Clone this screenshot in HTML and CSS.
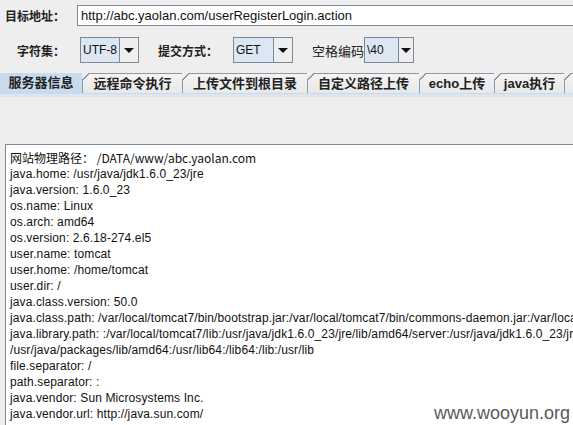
FILE: index.html
```html
<!DOCTYPE html>
<html>
<head>
<meta charset="utf-8">
<link rel="stylesheet" href="styles.css">
</head>
<body>
<div class="app">
  <div class="row url-row">
    <span class="label">目标地址：</span>
    <div class="input">http://abc.yaolan.com/userRegisterLogin.action</div>
  </div>
  <div class="row opt-row">
    <span class="label l1">字符集：</span>
    <div class="combo c1"><span class="val">UTF-8</span><span class="arrow"></span></div>
    <span class="label l2">提交方式：</span>
    <div class="combo c2"><span class="val">GET</span><span class="arrow"></span></div>
    <span class="label l3">空格编码</span>
    <div class="combo c3"><span class="val">\40</span><span class="arrow"></span></div>
  </div>
  <div class="tabs">
    <div class="tab sel t1">服务器信息</div>
    <div class="tab t2">远程命令执行</div>
    <div class="tab t3">上传文件到根目录</div>
    <div class="tab t4">自定义路径上传</div>
    <div class="tab t5">echo上传</div>
    <div class="tab t6">java执行</div>
    <div class="tab t7"></div>
  </div>
  <div class="band"></div>
  <div class="panel">
    <div class="textarea">
      <div class="cjk">网站物理路径： /DATA/www/abc.yaolan.com</div>
      <div>java.home: /usr/java/jdk1.6.0_23/jre</div>
      <div>java.version: 1.6.0_23</div>
      <div>os.name: Linux</div>
      <div>os.arch: amd64</div>
      <div>os.version: 2.6.18-274.el5</div>
      <div>user.name: tomcat</div>
      <div>user.home: /home/tomcat</div>
      <div>user.dir: /</div>
      <div>java.class.version: 50.0</div>
      <div>java.class.path: /var/local/tomcat7/bin/bootstrap.jar:/var/local/tomcat7/bin/commons-daemon.jar:/var/loca</div>
      <div>java.library.path: :/var/local/tomcat7/lib:/usr/java/jdk1.6.0_23/jre/lib/amd64/server:/usr/java/jdk1.6.0_23/jre</div>
      <div>/usr/java/packages/lib/amd64:/usr/lib64:/lib64:/lib:/usr/lib</div>
      <div>file.separator: /</div>
      <div>path.separator: :</div>
      <div>java.vendor: Sun Microsystems Inc.</div>
      <div>java.vendor.url: http://java.sun.com/</div>
    </div>
    <div class="watermark">www.wooyun.org</div>
  </div>
</div>
</body>
</html>
```
FILE: styles.css
```css
html, body {
  margin: 0;
  padding: 0;
  background: #eeeeee;
  overflow: hidden;
}
.app {
  width: 573px;
  height: 425px;
  display: flex;
  flex-direction: column;
  font-family: "Liberation Sans", Arial, "Noto Sans CJK SC", sans-serif;
  color: #111;
  overflow: hidden;
}
.row {
  display: flex;
  align-items: center;
}
.url-row {
  height: 21px;
  padding-top: 5px;
}
.label {
  font-family: "Noto Sans CJK SC", sans-serif;
  font-weight: bold;
  font-size: 12px;
  color: #222;
  white-space: nowrap;
}
.url-row .label {
  margin-left: 5px;
  width: 72px;
}
.input {
  flex: 1;
  height: 19px;
  border: 1px solid #7a8a99;
  border-right: none;
  background: #fff;
  font-size: 13px;
  line-height: 19px;
  padding-left: 3px;
  white-space: nowrap;
}
.opt-row {
  height: 26px;
  margin-top: 11px;
}
.l1 { margin-left: 17px; width: 63px; }
.l2 { margin-left: 19px; width: 75px; }
.l3 { margin-left: 19px; width: 52px; font-weight: normal; font-size: 13px; }
.combo {
  display: flex;
  height: 24px;
  border: 1px solid #7a8a99;
  background: #eeeeee;
}
.combo .val {
  background: #dce7f3;
  border-right: 1px solid #7a8a99;
  font-size: 12px;
  line-height: 24px;
  padding-left: 2px;
  white-space: nowrap;
  overflow: hidden;
}
.c1 .val { width: 36px; }
.c2 .val { width: 37px; }
.c3 .val { width: 31px; }
.combo .arrow {
  width: 18px;
  display: flex;
  align-items: center;
  justify-content: center;
}
.combo .arrow::after {
  content: "";
  border-left: 5px solid transparent;
  border-right: 5px solid transparent;
  border-top: 5px solid #111;
}
.c3 .arrow { width: 14px; }
.tabs {
  display: flex;
  margin-top: 10px;
  height: 20px;
  align-items: flex-end;
  overflow: hidden;
}
.tab {
  position: relative;
  flex-shrink: 0;
  box-sizing: border-box;
  height: 20px;
  border: 1px solid #8a9aab;
  border-bottom: none;
  margin-right: -1px;
  background: linear-gradient(#f4f4f4, #e8e8e8);
  font-family: "Liberation Sans", Arial, "Noto Sans CJK SC", sans-serif;
  font-weight: bold;
  font-size: 13px;
  line-height: 19px;
  color: #222;
  white-space: nowrap;
  text-align: center;
}
.tab::before {
  content: "";
  position: absolute;
  left: -1px;
  top: -1px;
  width: 7px;
  height: 7px;
  background: linear-gradient(135deg, #eeeeee 0, #eeeeee 46%, #8a9aab 46%, #8a9aab 60%, transparent 60%);
}
.tab.sel {
  background: #c8dbee;
  height: 21px;
}
.t1 { width: 83px; border-left: none; }
.t1::before { display: none; }
.t2 { width: 101px; }
.t3 { width: 126px; }
.t4 { width: 113px; }
.t5 { width: 76px; }
.t6 { width: 71px; }
.t7 { width: 20px; }
.band {
  height: 3px;
  border-top: 1px solid #c8dbee;
  background: #dde6ef;
}
.panel {
  flex: 1;
  display: flex;
  position: relative;
  padding-top: 47px;
  padding-left: 5px;
}
.textarea {
  flex: 1;
  background: #fff;
  border-top: 1px solid #7a8a99;
  border-left: 1px solid #7a8a99;
  padding: 5px 0 0 4px;
  font-size: 12px;
  letter-spacing: 0.12px;
  line-height: 16px;
  color: #111;
  white-space: nowrap;
  overflow: hidden;
}
.textarea .cjk {
  font-family: "Noto Sans CJK SC", "Liberation Sans", sans-serif;
  letter-spacing: 0;
}
.watermark {
  position: absolute;
  right: 3px;
  bottom: 2px;
  font-size: 18px;
  line-height: 20px;
  color: #5a5a5a;
  font-family: "Liberation Sans", Arial, sans-serif;
}
```
